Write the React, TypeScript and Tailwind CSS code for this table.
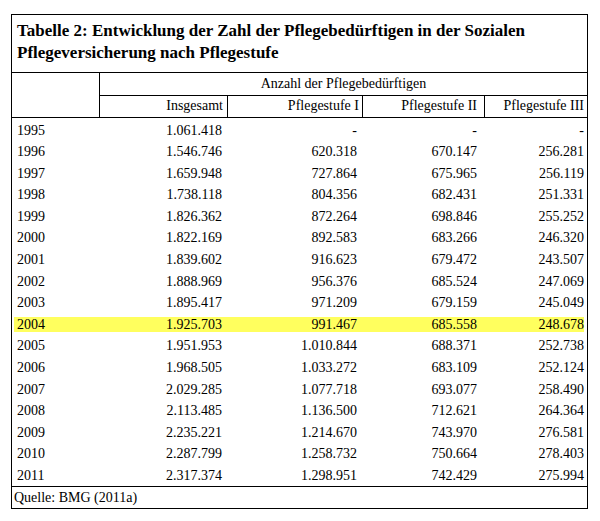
const rows: [string, string, string, string, string][] = [
  ["1995", "1.061.418", "-", "-", "-"],
  ["1996", "1.546.746", "620.318", "670.147", "256.281"],
  ["1997", "1.659.948", "727.864", "675.965", "256.119"],
  ["1998", "1.738.118", "804.356", "682.431", "251.331"],
  ["1999", "1.826.362", "872.264", "698.846", "255.252"],
  ["2000", "1.822.169", "892.583", "683.266", "246.320"],
  ["2001", "1.839.602", "916.623", "679.472", "243.507"],
  ["2002", "1.888.969", "956.376", "685.524", "247.069"],
  ["2003", "1.895.417", "971.209", "679.159", "245.049"],
  ["2004", "1.925.703", "991.467", "685.558", "248.678"],
  ["2005", "1.951.953", "1.010.844", "688.371", "252.738"],
  ["2006", "1.968.505", "1.033.272", "683.109", "252.124"],
  ["2007", "2.029.285", "1.077.718", "693.077", "258.490"],
  ["2008", "2.113.485", "1.136.500", "712.621", "264.364"],
  ["2009", "2.235.221", "1.214.670", "743.970", "276.581"],
  ["2010", "2.287.799", "1.258.732", "750.664", "278.403"],
  ["2011", "2.317.374", "1.298.951", "742.429", "275.994"],
];

const App = () => {
  return (
    <div className="bg-white w-[600px] h-[521px] pt-[14px] pl-[11px] text-black font-['Liberation_Serif',serif] text-[14px]">
      <div className="w-[577px] border-l border-t border-r-[1.5px] border-b-[1.5px] border-black">
        <div className="h-[58px] border-b border-black pl-[5px] pt-[5px] text-[17px] leading-[22px] font-bold">
          Tabelle 2: Entwicklung der Zahl der Pflegebedürftigen in der Sozialen
          <br />
          Pflegeversicherung nach Pflegestufe
        </div>

        <div className="grid grid-cols-[88px_128px_135px_122px_1fr] border-b border-black">
          <div className="row-span-2 border-r border-black"></div>
          <div className="col-span-4 h-[23px] border-b border-black text-center pt-[3px] leading-[16px]">
            Anzahl der Pflegebedürftigen
          </div>
          <div className="h-[21px] border-r border-black text-right pr-[4px] pt-[2px] leading-[16px]">
            Insgesamt
          </div>
          <div className="h-[21px] border-r border-black text-right pr-[3px] pt-[2px] leading-[16px]">
            Pflegestufe I
          </div>
          <div className="h-[21px] border-r border-black text-right pr-[7px] pt-[2px] leading-[16px]">
            Pflegestufe II
          </div>
          <div className="h-[21px] text-right pr-[3px] pt-[2px] leading-[16px]">
            Pflegestufe III
          </div>
        </div>

        <div className="pb-[1px] border-b border-black">
          {rows.map((r) => (
            <div key={r[0]} className="h-[21.6px] pt-[4.5px] pl-[2px] pr-[3px]">
              <div
                className={
                  "grid grid-cols-[86px_128px_135px_122px_1fr] h-[15.4px] leading-[15.4px] " +
                  (r[0] === "2004" ? "bg-[#ffff5e]" : "")
                }
              >
                <div className="pl-[3px]">{r[0]}</div>
                <div className="text-right pr-[6px]">{r[1]}</div>
                <div className="text-right pr-[6px]">{r[2]}</div>
                <div className="text-right pr-[8px]">{r[3]}</div>
                <div className="text-right">{r[4]}</div>
              </div>
            </div>
          ))}
        </div>

        <div className="h-[21px] pl-[2px] pt-[3px] leading-[16px]">Quelle: BMG (2011a)</div>
      </div>
    </div>
  );
};

export default App;
